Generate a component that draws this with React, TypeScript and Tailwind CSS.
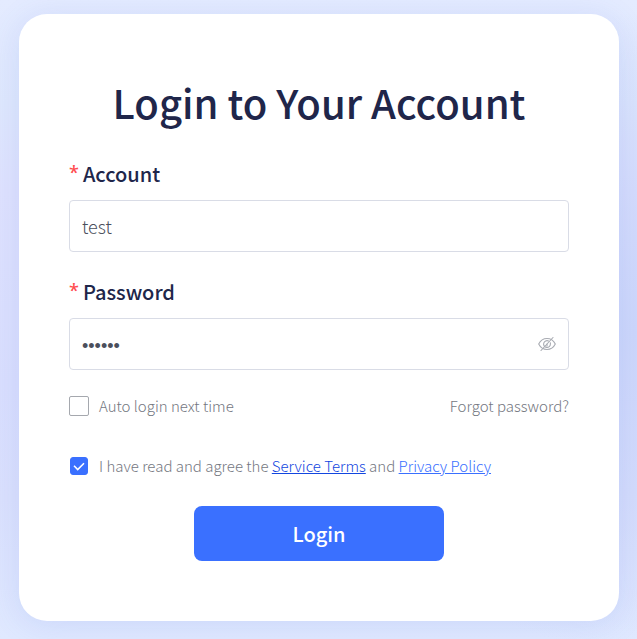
import { useState } from 'react';
import type { InputHTMLAttributes, ReactNode } from 'react';

type FieldProps = InputHTMLAttributes<HTMLInputElement> & {
  id: string;
  label: string;
  children?: ReactNode;
};

function Field({ id, label, children, ...props }: FieldProps) {
  return (
    <div>
      <label htmlFor={id} className="flex gap-1 text-[20px] leading-7 font-medium text-[#20264a]">
        <span className="font-['Noto_Sans',sans-serif] text-[18px] leading-6 text-[#ff4d4f]">*</span>
        {label}
      </label>
      <div className="mt-3 flex h-[52px] items-center rounded border border-[#d9dce6] bg-white px-3">
        <input
          id={id}
          className="h-full min-w-0 flex-1 bg-transparent text-[18px] font-light text-[#4b4f5c] outline-none [&[type=password]]:pt-1 [&[type=password]]:font-['Liberation_Sans',sans-serif]"
          {...props}
        />
        {children}
      </div>
    </div>
  );
}

function Checkbox({ id, defaultChecked }: { id: string; defaultChecked?: boolean }) {
  return (
    <span className="grid size-5 shrink-0 place-items-center">
      <input
        id={id}
        type="checkbox"
        defaultChecked={defaultChecked}
        className="peer col-start-1 row-start-1 size-5 appearance-none rounded-[2px] border border-[#a5a8ae] bg-white checked:size-[18px] checked:rounded-[3px] checked:border-[#3a70ff] checked:bg-[#3a70ff]"
      />
      <svg
        viewBox="0 0 12 9"
        className="pointer-events-none col-start-1 row-start-1 hidden h-[9px] w-3 peer-checked:block"
        fill="none"
        stroke="#fff"
        strokeWidth="1.6"
      >
        <path d="M1 3.800 4.700 7.500 11 1.200" />
      </svg>
    </span>
  );
}

function EyeOff() {
  return (
    <svg
      viewBox="0 0 18 16"
      className="h-4 w-[18px]"
      fill="none"
      stroke="currentColor"
      strokeWidth="1.1"
      strokeLinecap="round"
    >
      <path d="M.7 8C2.500 4.400 5.500 2.500 9 2.500S15.500 4.400 17.300 8C15.500 11.600 12.500 13.500 9 13.500S2.500 11.600.7 8Z" />
      <path d="M10.500 5A3.400 3.400 0 1 0 12.400 8V6.800M9 8v2" />
      <path d="M15 1.500 3 14.500" />
    </svg>
  );
}

export default function App() {
  const [visible, setVisible] = useState(false);

  return (
    <div className="min-h-screen bg-[radial-gradient(ellipse_50%_50%_at_100%_52%,#cdd7fb_0%,#cdd7fb00_100%),linear-gradient(180deg,#e4ebff_0%,#dfe8fd_16%,#dfe2fe_30%,#dadffe_60%,#dbe1fd_78%,#e0e9ff_100%)] pt-[14px] pr-[18px] pb-[18px] pl-[19px] font-['Noto_Sans_CJK_SC',sans-serif]">
      <form
        onSubmit={(e) => e.preventDefault()}
        className="mx-auto max-w-[600px] rounded-[28px] bg-white px-[50px] pt-[60px] pb-[60px] shadow-[0_4px_32px_rgba(80,110,220,0.14)]"
      >
        <h1 className="text-center text-[40px] leading-[56px] font-medium text-[#20264a]">
          Login to Your Account
        </h1>

        <div className="mt-[30px] flex flex-col gap-[26px]">
          <Field id="account" label="Account" type="text" defaultValue="test" />
          <Field id="password" label="Password" type={visible ? 'text' : 'password'} defaultValue="123456">
            <button
              type="button"
              aria-label="Toggle password visibility"
              onClick={() => setVisible(!visible)}
              className="text-[#a8abb2]"
            >
              <EyeOff />
            </button>
          </Field>
        </div>

        <div className="mt-6 flex items-center justify-between text-[15px] leading-6 font-light text-[#74777f]">
          <label htmlFor="auto" className="flex items-center gap-2.5">
            <Checkbox id="auto" />
            Auto login next time
          </label>
          <a href="#forgot">Forgot password?</a>
        </div>

        <div className="mt-9 flex items-center gap-2.5 text-[15px] leading-6 font-light text-[#74777f]">
          <Checkbox id="agree" defaultChecked />
          <label htmlFor="agree">
            I have read and agree the{' '}
            <a href="#terms" className="text-[#1246e0] underline">Service Terms</a> and{' '}
            <a href="#privacy" className="text-[#3a70ff] underline">Privacy Policy</a>
          </label>
        </div>

        <button
          type="submit"
          className="mx-auto mt-7 block h-[55px] w-[250px] rounded-lg bg-[#3a70ff] text-[20px] font-medium text-white"
        >
          Login
        </button>
      </form>
    </div>
  );
}
